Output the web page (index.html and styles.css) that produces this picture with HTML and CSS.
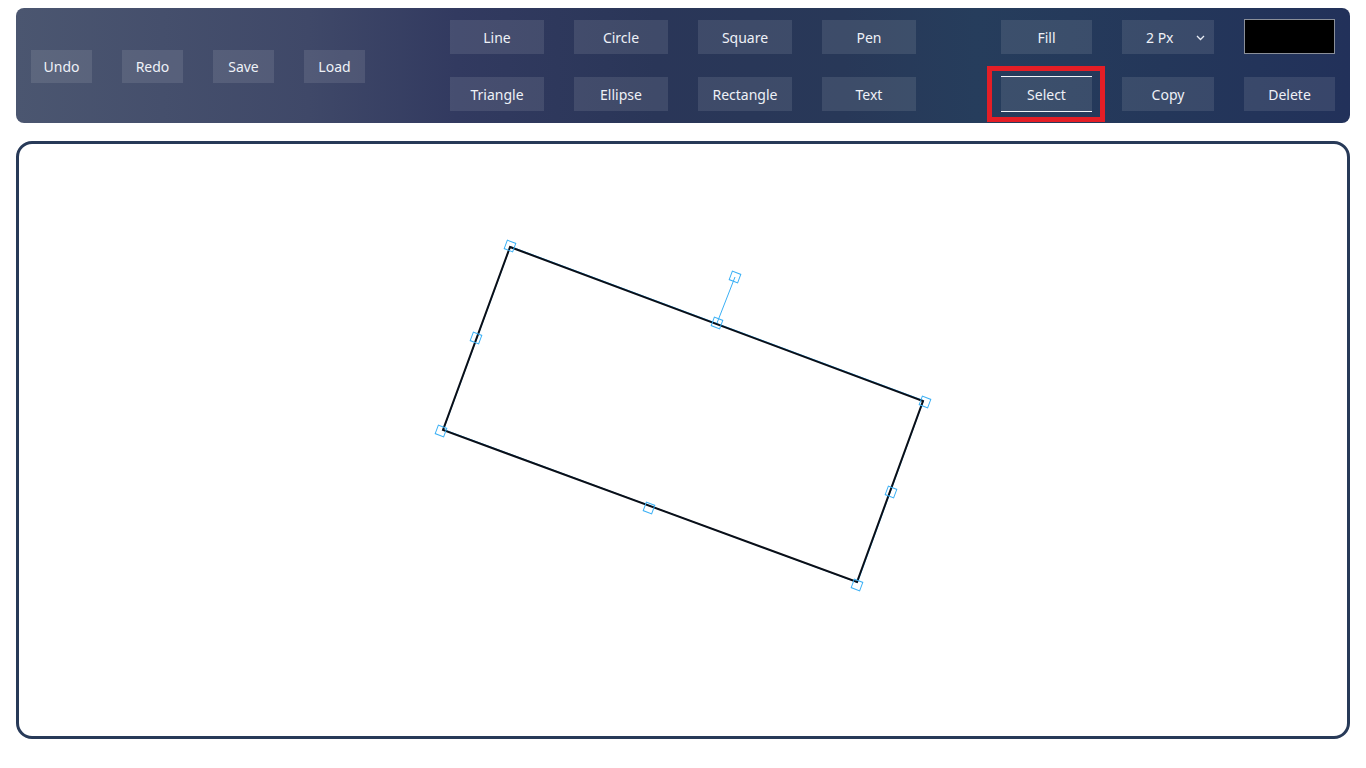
FILE: index.html
```html
<!DOCTYPE html>
<html>
<head>
<meta charset="utf-8">
<link rel="stylesheet" href="styles.css">
</head>
<body>
<div class="toolbar">
  <div class="group-left">
    <button class="btn btn-sm">Undo</button>
    <button class="btn btn-sm">Redo</button>
    <button class="btn btn-sm">Save</button>
    <button class="btn btn-sm">Load</button>
  </div>
  <div class="group-grid shapes">
    <button class="btn">Line</button>
    <button class="btn">Circle</button>
    <button class="btn">Square</button>
    <button class="btn">Pen</button>
    <button class="btn">Triangle</button>
    <button class="btn">Ellipse</button>
    <button class="btn">Rectangle</button>
    <button class="btn">Text</button>
  </div>
  <div class="group-grid tools">
    <button class="btn">Fill</button>
    <div class="btn dropdown"><span>2 Px</span>
      <svg class="chev" width="9" height="6" viewBox="0 0 9 6"><path d="M1 1 L4.5 4.5 L8 1" fill="none" stroke="#e9edf5" stroke-width="1.3"/></svg>
    </div>
    <div class="swatch"></div>
    <button class="btn selected">Select</button>
    <button class="btn">Copy</button>
    <button class="btn">Delete</button>
  </div>
</div>
<div class="canvas">
  <svg class="drawing" width="1328" height="592" viewBox="0 0 1328 592">
    <g transform="translate(-19 -144)">
      <g fill="none" stroke="#3bb0f5" stroke-width="1">
        <line x1="717" y1="323" x2="735" y2="277"/>
        <polygon points="510.5,246.5 923.5,400.5 857.5,582.5 443.5,429.5" stroke-width="1"/>
      </g>
      <polygon points="510,247 923,401 857,582 443,430" fill="none" stroke="#0a0f18" stroke-width="2" stroke-linejoin="miter"/>
      <g fill="#ffffff" fill-opacity="0" stroke="#3bb0f5" stroke-width="1">
        <rect x="-4.5" y="-4.5" width="9" height="9" transform="translate(510 246) rotate(20.5)"/>
        <rect x="-4.5" y="-4.5" width="9" height="9" transform="translate(925 402) rotate(20.5)"/>
        <rect x="-4.5" y="-4.5" width="9" height="9" transform="translate(857 585) rotate(20.5)"/>
        <rect x="-4.5" y="-4.5" width="9" height="9" transform="translate(441 431) rotate(20.5)"/>
        <rect x="-4.5" y="-4.5" width="9" height="9" transform="translate(717 323) rotate(20.5)"/>
        <rect x="-4.5" y="-4.5" width="9" height="9" transform="translate(891 492) rotate(20.5)"/>
        <rect x="-4.5" y="-4.5" width="9" height="9" transform="translate(649 508) rotate(20.5)"/>
        <rect x="-4.5" y="-4.5" width="9" height="9" transform="translate(476 338) rotate(20.5)"/>
        <rect x="-4.5" y="-4.5" width="9" height="9" transform="translate(735 277) rotate(20.5)"/>
      </g>
    </g>
  </svg>
</div>
</body>
</html>
```

FILE: styles.css
```css
html, body {
  margin: 0;
  padding: 0;
  background: #ffffff;
}
body {
  padding: 8px 16px 0 16px;
  font-family: "Noto Sans", "Open Sans", sans-serif;
}
.toolbar {
  height: 115px;
  box-sizing: border-box;
  padding: 12px 15px 12px 15px;
  border-radius: 8px;
  background: linear-gradient(90deg, #4b5670 0%, #3f4868 22%, #323a60 33%, #2a3658 48%, #283858 62%, #263d5c 72%, #24375a 86%, #22315a 100%);
  display: flex;
  justify-content: space-between;
  align-items: stretch;
}
.group-left {
  display: flex;
  align-items: center;
  gap: 30px;
}
.group-grid {
  display: grid;
  grid-template-rows: 34px 34px;
  row-gap: 23px;
  column-gap: 30px;
  align-content: start;
}
.shapes {
  grid-template-columns: repeat(4, 94px);
}
.tools {
  grid-template-columns: 91px 92px 91px;
}
.btn {
  border: none;
  margin: 0;
  padding: 1px 0 0 0;
  background: rgba(255, 255, 255, 0.1);
  color: #eef1f7;
  font-family: "Noto Sans", "Open Sans", sans-serif;
  font-size: 14px;
  line-height: 1;
  display: flex;
  align-items: center;
  justify-content: center;
  box-sizing: border-box;
}
.btn-sm {
  width: 61px;
  height: 33px;
  margin-top: 1px;
}
.dropdown {
  position: relative;
  justify-content: flex-start;
  padding-left: 24px;
}
.dropdown .chev {
  position: absolute;
  right: 9px;
  top: 15px;
}
.swatch {
  background: #000000;
  border: 1px solid #8a8f99;
  margin-top: -1px;
  height: 35px;
  box-sizing: border-box;
}
.selected {
  position: relative;
  border-top: 1px solid #f2f4f8;
  border-bottom: 1px solid #f2f4f8;
  margin-top: -1px;
  height: 36px;
}
.selected::after {
  content: "";
  position: absolute;
  left: -14px;
  right: -13px;
  top: -11px;
  bottom: -11px;
  border: 5px solid #e41e26;
}
.canvas {
  margin-top: 18px;
  height: 598px;
  box-sizing: border-box;
  border: 3px solid #283a58;
  border-radius: 16px;
  background: #ffffff;
  overflow: hidden;
}
.drawing {
  display: block;
}
```
